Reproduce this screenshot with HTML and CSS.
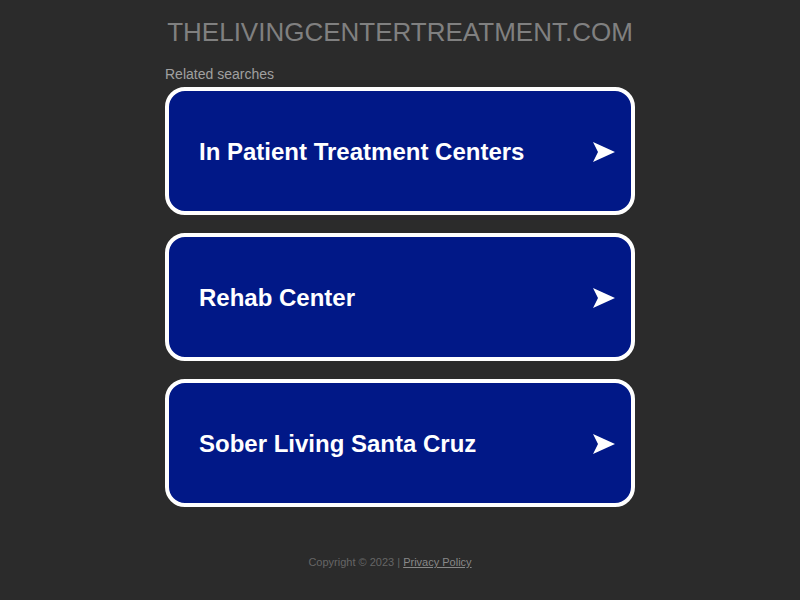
FILE: index.html
```html
<!DOCTYPE html>
<html>
<head>
<meta charset="utf-8">
<link rel="stylesheet" href="styles.css">
</head>
<body>
<div class="page">
  <h1 class="domain">THELIVINGCENTERTREATMENT.COM</h1>
  <div class="related">Related searches</div>
  <a class="card" href="#"><span class="label">In Patient Treatment Centers</span><svg class="arrow" width="22" height="20" viewBox="0 0 22 20"><polygon points="0,0 22,10 0,20 5,10" fill="#fff"/></svg></a>
  <a class="card" href="#"><span class="label">Rehab Center</span><svg class="arrow" width="22" height="20" viewBox="0 0 22 20"><polygon points="0,0 22,10 0,20 5,10" fill="#fff"/></svg></a>
  <a class="card" href="#"><span class="label">Sober Living Santa Cruz</span><svg class="arrow" width="22" height="20" viewBox="0 0 22 20"><polygon points="0,0 22,10 0,20 5,10" fill="#fff"/></svg></a>
  <div class="footer">Copyright © 2023 | <a href="#">Privacy Policy</a></div>
</div>
</body>
</html>
```
FILE: styles.css
```css
html, body {
  margin: 0;
  padding: 0;
  background: #2b2b2b;
  font-family: "Liberation Sans", Arial, sans-serif;
}
.page {
  width: 470px;
  margin: 0 auto;
  padding-top: 16px;
  display: flex;
  flex-direction: column;
}
.domain {
  margin: 0;
  font-size: 26px;
  font-weight: normal;
  color: #808080;
  text-align: center;
  line-height: 32px;
}
.related {
  margin-top: 18px;
  font-size: 14px;
  color: #a0a0a0;
  line-height: 16px;
  margin-bottom: 5px;
}
.card {
  box-sizing: border-box;
  height: 128px;
  border: 4px solid #fff;
  border-radius: 20px;
  background: #011887;
  display: flex;
  align-items: center;
  justify-content: space-between;
  padding: 1px 16px 0 30px;
  margin-bottom: 18px;
  text-decoration: none;
}
.label {
  color: #fff;
  font-weight: bold;
  font-size: 24px;
}
.arrow {
  display: block;
}
.footer {
  margin-top: 31px;
  padding-right: 20px;
  text-align: center;
  font-size: 11px;
  color: #666;
}
.footer a {
  color: #888;
}
```
